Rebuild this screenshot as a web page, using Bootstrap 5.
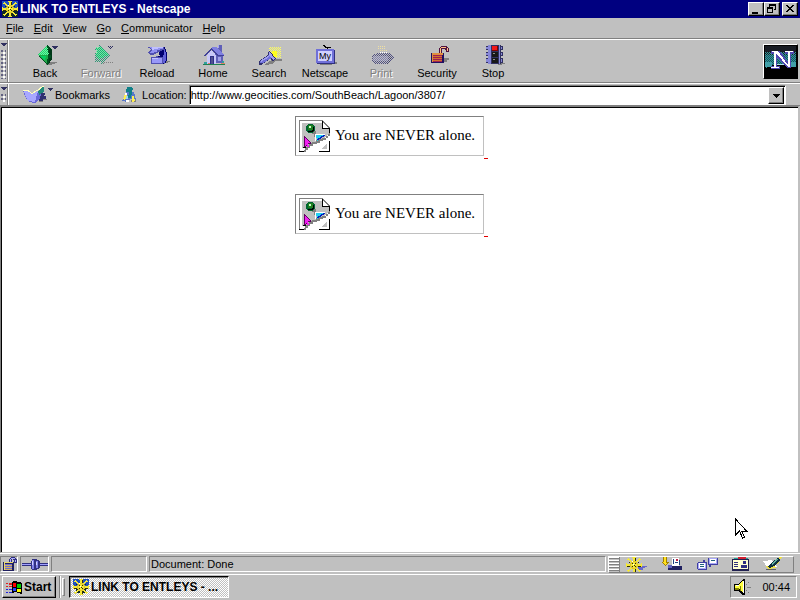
<!DOCTYPE html>
<html lang="en">
<head>
<meta charset="utf-8">
<meta name="viewport" content="width=device-width, initial-scale=1">
<title>LINK TO ENTLEYS - Netscape</title>
<link href="https://cdn.jsdelivr.net/npm/bootstrap@5.3.0/dist/css/bootstrap.min.css" rel="stylesheet">
<style>
body{font-family:"Liberation Sans",Arial,sans-serif;font-size:11px;line-height:14px;color:#000;background:#c0c0c0}
svg{shape-rendering:crispEdges;flex:none;display:block}
button{font:inherit;color:inherit;background:none;border:0;padding:0;border-radius:0}
.screen{min-height:100vh}
.titlebar{background:#000080;color:#fff;height:18px;font-size:12px;font-weight:bold;padding:0 2px;gap:2px}
.raised{background:#c0c0c0;border:1px solid;border-color:#fff #000 #000 #fff;box-shadow:inset -1px -1px #808080}
.sunken{border:1px solid;border-color:#808080 #fff #fff #808080}
.winbtn{width:16px;height:14px}
.winbtn.closer{margin-left:2px}
.menubar{height:21px;gap:10px;padding:0 6px;border-bottom:1px solid #808080}
.menubar a{color:#000;text-decoration:none}
.menubar a u{text-underline-offset:1px}
.band{border-top:1px solid #fff;border-bottom:1px solid #808080}
.toolbar{height:44px}
.locbar{height:23px;padding-right:14px}
.grip{width:8px;border-right:1px solid #808080;box-shadow:1px 0 #fff;padding:3px 1px}
.dots{width:5px;background-image:radial-gradient(circle at 1px 1px,#606080 0 1px,transparent 1px),radial-gradient(circle at 3px 3px,#fff 0 1px,transparent 1px);background-size:4px 4px}
.tool{width:56px;padding-top:4px}
.tool:disabled{color:#808080;text-shadow:1px 1px #fff}
.tools{margin-left:9px}
.nlogo{width:35px;height:35px;margin-right:2px}
.bookmarks{margin-left:15px}
.where{gap:6px;margin:0 2px 0 12px}
.field{border:1px solid #808080;border-right-color:#fff;border-bottom-color:#fff;box-shadow:inset 1px 1px #000;background:#fff;height:20px;padding:2px 1px 1px 1px}
.field input{border:0;outline:0;padding:0;background:transparent;font:inherit;color:#000;min-width:0;height:14px}
.drop{width:16px;height:17px;margin-top:-1px}
.page{background:#fff;border:1px solid #808080;border-right-color:#c0c0c0;border-bottom-color:#c0c0c0;box-shadow:inset 1px 1px #000;padding:9px 16px 8px 0;gap:35px;margin-right:1px;font-family:"Liberation Serif","Times New Roman",serif;font-size:15px;line-height:20px}
.page a{color:#000;text-decoration:none}
.broken{border:1px solid;border-color:#808080 #c0c0c0 #c0c0c0 #808080;height:40px;padding:3px 8px 3px 3px;gap:4px}
.alt{padding-top:5px}
.tail{width:4px;height:43px;border-bottom:1px solid #e00000}
.pointer{position:absolute;right:50px;bottom:12px}
.status{height:21px;padding:2px 6px 2px 0;gap:2px;border-top:1px solid #fff}
.cell{height:16px;line-height:15px;padding-left:1px}
.lock{width:18px}.plug{width:29px}.progress-cell{width:96px}
.components{width:186px;height:17px;border:1px solid;border-color:#fff #808080 #808080 #fff;padding-right:11px}
.ridges{width:11px;align-self:stretch;border-right:1px solid #808080;background:repeating-linear-gradient(#fff 0 1px,#808080 1px 2px,#c0c0c0 2px 3px)}
.launchers{padding-left:6px}
.taskbar{height:26px;border-top:1px solid #fff;padding:0 3px 1px 2px}
.start{width:54px;height:22px;font-size:12px;font-weight:bold;gap:2px;padding-left:2px}
.sep{width:2px;height:22px;border-left:1px solid #808080;border-right:1px solid #fff;margin-left:3px}
.handle{width:3px;height:18px;border:1px solid;border-color:#fff #808080 #808080 #fff;margin:0 4px 0 1px}
.task{width:160px;height:22px;border:1px solid;border-color:#000 #fff #fff #000;box-shadow:inset 1px 1px #808080;background:repeating-conic-gradient(#fff 0 25%,#c0c0c0 0 50%) 0 0/2px 2px;font-size:12px;font-weight:bold;padding-left:3px;gap:2px}
.tray{width:67px;height:22px;padding:0 6px 0 3px}
</style>
<script src="https://cdn.jsdelivr.net/npm/bootstrap@5.3.0/dist/js/bootstrap.bundle.min.js"></script>
</head>
<body>
<svg width="0" height="0" class="position-absolute" aria-hidden="true">
<defs>
<pattern id="chk" width="2" height="2" patternUnits="userSpaceOnUse"><path fill="#c0c0c0" d="M0 0h1v1H0zM1 1h1v1H1z"/></pattern>
<pattern id="mint" width="2" height="2" patternUnits="userSpaceOnUse"><path fill="#60ffa0" d="M0 0h1v1H0zM1 1h1v1H1z"/></pattern>
<pattern id="teal" width="2" height="2" patternUnits="userSpaceOnUse"><path fill="#309898" d="M0 0h1v1H0zM1 1h1v1H1z"/></pattern>
<pattern id="glow" width="2" height="2" patternUnits="userSpaceOnUse"><path fill="#ffff60" d="M0 0h1v1H0zM1 1h1v1H1z"/></pattern>
<symbol id="wheel" viewBox="0 0 16 16">
<path fill="#303000" d="M9 1h1v3H9zM9 12h1v3H9zM1 9h3v1H1zM12 9h3v1h-3zM3 5h1v1H3zM12 5h1v1h-1zM4 12h1v1H4zM12 12h1v1h-1z"/>
<path fill="#f4e838" d="M6 0h4v1H9v4H7V1H6zM7 11h2v4h1v1H6v-1h1zM0 6h1v1h4v2H1v1H0zM11 7h4V6h1v4h-1V9h-4zM1 2h1V1h1v1h1v1h1v1h1v1H4V4H3V3H1zM15 2h-1V1h-1v1h-1v1h-1v1h-1v1h2V4h1V3h2zM1 14h1v1h1v-1h1v-1h1v-1h1v-1H4v1H3v1H1zM15 14h-1v1h-1v-1h-1v-1h-1v-1h-1v-1h2v1h1v1h2z"/>
<path fill="#e0c828" fill-rule="evenodd" d="M6 4h4v1h1v1h1v4h-1v1h-1v1H6v-1H5v-1H4V6h1V5h1zM6 6v4h4V6z"/>
<path fill="#f4e838" d="M7 5h2v6H7zM5 7h6v2H5z"/><path fill="#303000" d="M8 8h1v1H8zM6 6h1v1H6zM9 6h1v1H9zM6 9h1v1H6zM9 9h1v1H9z"/><path fill="#fff" d="M7 7h1v1H7zM6 4h1v1H6z"/>
</symbol>
<symbol id="openlock" viewBox="0 0 20 20">
<path fill="#808080" d="M14 13h5v2h-2v2h-3z"/><path fill="#201060" d="M1 8h13v10H1z"/><path fill="#e09040" d="M2 8h11v2H2zM2 8h1v9H2z"/><path fill="#a02050" d="M3 10h9v1H3zM3 12h9v1H3zM3 14h9v1H3zM3 16h9v1H3z"/><path fill="#d07030" d="M3 11h9v1H3zM3 13h9v1H3zM3 15h9v1H3z"/>
<path fill="#501040" d="M9 3h1V2h1V1h6v1h1v1h1v4h-3V5h-1V4h-3v4H9z"/><path fill="#ffc080" d="M10 3h1V2h5v1h-5v5h-1zM17 3h1v3h-1z"/>
</symbol>
<symbol id="bluelock" viewBox="0 0 16 14">
<path fill="#202060" d="M1 5h11v9H1z"/><path fill="#e8d870" d="M2 5h9v1H2zM2 6h1v7H2z"/><path fill="#7070d0" d="M3 7h7v1H3zM3 9h7v1H3zM3 11h7v1H3z"/><path fill="#d0b060" d="M3 8h7v1H3zM3 10h7v1H3zM3 12h7v1H3z"/>
<path fill="#303080" d="M7 2h1V1h1V0h4v1h1v1h1v4h-3V3h-1V2h-1v3H7z"/><path fill="#b0b0ff" d="M8 2h1v3H8zM9 1h4v1H9zM13 3h1v2h-1z"/>
</symbol>
<symbol id="missing" viewBox="0 0 32 32">
<path fill="#fff" d="M0 0h24l7 8v23H0z"/><path fill="#c0c0c0" d="M3 3h20v6h7v5l-5 4-7 5-8 1-4 4H3z"/>
<path fill="#808080" d="M0 0h24v1H1v30H0z"/><path fill="#808080" d="M24 1h1v1h1v1h1v1h1v1h1v1h1v1h1v1h-2V7h-1V6h-1V5h-1V4h-1V3h-1z"/>
<path fill="#fff" d="M24 3l5 5h-5z"/><path d="M23 1h1v7h7v6h-1V9h-7zM30 21h1v11H20v-1h10zM0 31h5v1H0z"/>
<path fill="#808080" d="M30 13h1v3h-2v2h-2v2h-3v1h-3v2h-3v1h-4v2h-3v2h-2v2H7v2H5v-2h1v-3h2v-2h2v-2h3v-1h4v-2h3v-1h3v-1h4v-2h2v-2h1z"/>
<path fill="#808080" d="M13 11h4v3h2v3h-4v-3h-2z"/><path fill="#063" d="M9 4h5v1h1v1h1v5h-1v1h-1v1H9v-1H8v-1H7V6h1V5h1z"/><path fill="#208020" d="M9 5h5v5H9z"/><path fill="#cfc" d="M10 6h2v2h-2z"/><path d="M14 7h1v4h-1v1H9v-1h4v-1h1z"/>
<path fill="#20d0f0" d="M17 15h9l-8 6z"/><path fill="#0020c0" d="M24 15h2v1h-1v1h-2v1h-1v1h-2v1h-2v-1h1v-1h2v-1h1v-1h2z"/><path fill="#fff" d="M16 14h10v1h-9v6h-1z"/>
<path fill="#600060" d="M5 16h1v1h1v1h1v1h1v1h1v1h1v1h1v2H9v2H7v1H5z"/><path fill="#f020f0" d="M6 18l5 5H9v2H7v1H6zM8 25h2v2H8z"/><path fill="#000" d="M4 27h3v1H4z"/><path fill="#c0c0c0" d="M28 23v6h-6z"/>
</symbol>
</defs>
</svg>

<div class="screen d-flex flex-column">
<header class="titlebar d-flex align-items-center">
<svg width="16" height="16"><path fill="#2050c0" d="M0 0h16v9H0z"/><path fill="#102828" d="M0 8h16v8H0z"/><use href="#wheel" width="16" height="16"/></svg>
<span class="flex-grow-1">LINK TO ENTLEYS - Netscape</span>
<div class="d-flex">
<button class="raised winbtn" aria-label="Minimize"><svg width="14" height="12"><path d="M3 9h6v2H3z"/></svg></button>
<button class="raised winbtn" aria-label="Restore"><svg width="14" height="12"><path fill-rule="evenodd" d="M4 1h7v6H9V6h1V3H5v1H4zM2 4h6v6H2zM3 6h4v3H3z"/></svg></button>
<button class="raised winbtn closer" aria-label="Close"><svg width="14" height="12"><path d="M3 2h2v1h1v1h2V3h1V2h2v1h-1v1H9v1H8v1h1v1h1v1h1v1H9V8H8V7H6v1H5v1H3V8h1V7h1V6h1V5H5V4H4V3H3z"/></svg></button>
</div>
</header>
<nav class="menubar d-flex align-items-center" aria-label="Menu">
<a href="#"><u>F</u>ile</a><a href="#"><u>E</u>dit</a><a href="#"><u>V</u>iew</a><a href="#"><u>G</u>o</a><a href="#"><u>C</u>ommunicator</a><a href="#"><u>H</u>elp</a>
</nav>
<div class="band toolbar d-flex" role="toolbar" aria-label="Navigation">
<div class="grip d-flex flex-column gap-1"><svg width="6" height="3"><path fill="#303060" d="M0 0h6v1H5v1H4v1H2V2H1V1H0z"/></svg><div class="dots flex-grow-1"></div></div>
<div class="tools d-flex flex-grow-1">
<button class="tool d-flex flex-column align-items-center"><svg width="28" height="22">
<path fill="#808080" d="M17 18h9v1h-2v1h-3v1h-6v-1h2z"/><path fill="#005020" d="M16 1l5 5v8l-4 7-9-8z"/><path fill="#30c870" d="M7 11l9-10 1 10z"/><path fill="url(#mint)" d="M7 11l9-10 2 10z"/><path fill="#20a848" d="M7 11h10l-1 9z"/><path fill="#003818" d="M18 4l3 2v9l-3 5V14h2v-3h-2z"/><path fill="#00d060" d="M9 12h6l-1 5z"/><path fill="#303060" d="M21 2h6v1h-1v1h-1v1h-2V4h-1V3h-1z"/></svg>Back</button>
<button class="tool d-flex flex-column align-items-center" disabled><svg width="28" height="22">
<path fill="#808080" d="M14 19h12v-1h-9v2h-3z"/><path fill="#309878" d="M12 1l12 11-10 9v-3H8V9h2V6H8V4h4z"/><path fill="url(#chk)" d="M7 1h18v20H7z"/><path fill="url(#mint)" d="M9 3h5l7 8-8 4-4-3z"/><path fill="#303060" d="M21 2h1v1h-1zM23 2h1v1h-1zM25 2h1v1h-1zM22 3h1v1h-1zM24 3h1v1h-1zM23 4h1v1h-1z"/></svg>Forward</button>
<button class="tool d-flex flex-column align-items-center"><svg width="28" height="22">
<path fill="#808080" d="M20 17h7v1h-2v1h-3v1h-5v-1h3z"/><path fill="#000070" d="M14 3h8v2h1v3h1v9h-1v2h-2v1h-6v-8h2z"/><path fill="#5050b0" d="M5 3h16v2h1v1h-3v1h-2v1h-2v1h-2v1h-2v1H7v-1H6V9H5V8h1V7h1V6h1V5H7V4H5z"/><path fill="#9090f0" d="M7 3h13v2h-3v1h-3v2h-3v1H7V8h1V7h1V5H8V4H7z"/><path fill="#c0c0ff" d="M9 3h11v1h-5v1h-4v1H9z"/><path fill="#6060d8" d="M21 6h1v2h1v9h-1v2h-2v-8h1z"/><path fill="#5050b0" d="M8 13h5v-1h2v1h5v7H8z"/><path fill="#9898f8" d="M9 14h10v5H9z"/><path fill="#c0c0ff" d="M9 14h6v1H9z"/></svg>Reload</button>
<button class="tool d-flex flex-column align-items-center"><svg width="28" height="22">
<path fill="#208050" d="M4 20h22v1H4z"/><path fill="#6060b8" d="M19 1h4v9h-4zM16 10h8v9h-8z"/><path fill="#a8a8f0" d="M19 1h1v3h-1z"/><path fill="#c8c8f8" d="M8 11h9v9H8zM9 9h7v2H9zM11 7h3v2h-3z"/><path fill="#8080e0" d="M13 3h4l8 8h-7l-4-5z"/><path fill="#404098" d="M12 4h1v1h1v1h1v1h1v1h1v1h1v1h1v1h6v1h-7v-1h-1v-1h-1V9h-1V8h-1V7h-1V6h-1v1h-1v1h-1v1H9v1H8v1H7v1H5v-1h1v-1h1V9h1V8h1V7h1V6h1V5h1z"/><path fill="#303088" d="M11 12h4v8h-4z"/><path fill="#505090" d="M12 13h2v7h-2z"/><path fill="#a0a0e8" d="M19 13h3v4h-3z"/><path fill="#e08060" d="M9 19h2v1H9zM22 19h4v1h-4z"/><path fill="#30a0a0" d="M5 18h3v2H5zM23 17h2v2h-2z"/></svg>Home</button>
<button class="tool d-flex flex-column align-items-center"><svg width="28" height="22">
<path fill="#808080" d="M10 20l9-5h8v2h-6l-4 3-7 1z"/><path fill="url(#glow)" d="M14 3h12v11h-4l-8-6z"/><path fill="#ffff20" d="M17 7h5v6h-4z"/><path fill="#303070" d="M15 7l6 8-3 2-3-2-9 6H4v-4l9-6V8z"/><path fill="#7070d8" d="M5 17l9-6 3 3-9 5H5z"/><path fill="#a0a0f0" d="M14 8l3 3 3 4-2 1-4-4zM5 17l8-5 1 1-8 5z"/></svg>Search</button>
<button class="tool d-flex flex-column align-items-center"><svg width="28" height="22">
<path fill="#808080" d="M9 18h17v2h-5v1H9z"/><path fill="none" stroke="#000" d="M12 1l4 3 4-1M16 4v2"/><path fill="#303080" d="M6 6h18v14H6z"/><path fill="#7070d8" d="M5 5h18v14H5z"/><path fill="#d0d0ff" d="M7 7h14v10H7z"/><text x="8" y="15" font-size="9" fill="#000">My</text></svg>Netscape</button>
<button class="tool d-flex flex-column align-items-center" disabled><svg width="28" height="22">
<path fill="#f0e0a0" d="M10 2h8v1h-8zM11 4h8v1h-8zM12 6h8v1h-8z"/><path fill="#fff" d="M12 8h8v3h-8z"/><path fill="#505080" d="M5 12l5-3h12l5 5-5 6H8l-3-3z"/><path fill="#8080b0" d="M6 12h15v5H6z"/><path fill="url(#chk)" d="M4 1h23v20H4z"/><path fill="#404060" d="M22 11h1v1h-1zM23 14h1v1h-1zM22 17h1v1h-1zM20 19h1v1h-1z"/></svg>Print</button>
<button class="tool d-flex flex-column align-items-center"><svg width="28" height="22"><use href="#openlock" x="7" y="1" width="20" height="20"/></svg>Security</button>
<button class="tool d-flex flex-column align-items-center"><svg width="28" height="22">
<path fill="#808080" d="M19 19h7v1h-3v1h-4z"/><path fill="#303060" d="M9 1h13v19H9zM7 2h17v4h-3v2h3v4h-3v2h3v5h-3H7v-5h3v-2H7V8h3V6H7z"/><path fill="#8888d8" d="M9 1h3v19H9zM20 1h1v19h-1zM7 3h2v2H7zM7 9h2v2H7zM7 15h2v3H7zM22 3h1v2h-1zM22 9h1v2h-1zM22 15h1v3h-1z"/><path fill="#f01818" d="M13 2h5v5h-5z"/><path fill="#800000" d="M13 6h5v1h-5zM18 2h1v5h-1z"/><path fill="#181818" d="M13 8h6v5h-6zM13 14h6v5h-6z"/><path fill="#909090" d="M14 9h2v1h-2zM14 15h2v1h-2z"/></svg>Stop</button>
</div>
<a href="#" class="nlogo raised align-self-center" aria-label="Netscape"><svg width="33" height="33">
<path d="M0 0h33v33H0z"/><path fill="#181c24" d="M1 1h31v10H1z"/><path fill="#185060" d="M1 10h31v12H1z"/><path fill="url(#teal)" d="M1 7h31v16H1z"/><path fill="#40a0a8" d="M1 17h7v5H1zM26 17h6v5h-6z"/><path d="M1 24h3v-2h4v-2h5v-1h9v1h5v2h4v2h2v8H1z"/><path fill="#b0e0f0" d="M12 19h9v1h-9z"/>
<path fill="#5048b0" d="M7 6h9l8 11V9h-3V6h9v3h-3v14h-4L13 12v9h3v3H7v-3h3V9H7z"/><path fill="#fff" d="M8 6h6l10 14V7h-3V6h8v1h-3v15h-2L12 8v14h3v1H7v-1h3V7H8z"/></svg></a>
</div>
<div class="band locbar d-flex align-items-center">
<div class="grip d-flex flex-column gap-1 align-self-stretch"><svg width="6" height="3"><path fill="#303060" d="M0 0h6v1H5v1H4v1H2V2H1V1H0z"/></svg><div class="dots flex-grow-1"></div></div>
<button class="bookmarks d-flex align-items-center"><svg width="32" height="18">
<path fill="#808080" d="M16 13h8v1h-4v2h-4z"/><path fill="#303070" d="M16 7h6v2h-1v1h2v3h-3v2h-4z"/><path fill="#6868d8" d="M0 5l6 1 3 3 4-2 6-2-2 7-5 5-6-1-3-4z"/><path fill="#a8a8ff" d="M0 4h5l4 3 6-2-3 11-7-1z"/><path fill="none" stroke="#ffffc0" d="M0 4.500h5l4 3 7-4 2-2 3-1"/><path fill="#208878" d="M15 5l5-5 1 2v4l-5 3z"/><path fill="#303060" d="M25 2h5v1h-1v1h-1v1h-1V4h-1V3h-1z"/></svg>Bookmarks</button>
<div class="where d-flex align-items-center"><svg width="14" height="16"><path fill="#808080" d="M9 13h5v2H9z"/><path fill="#5878c8" d="M0 14l5-10 7 1 2 8-3 2-2-4-4 4z"/><path fill="#ffee50" d="M1 12l2-5 2 1-2 5zM10 9h2l1 5-3 1z"/><path fill="#108088" d="M5 0h5v1h1l-2 10H6l1-6H4z"/><path fill="#fff" d="M3 6h2v2H3zM4 13h3v2H4z"/><path fill="#a0d8f0" d="M4 9h2v3H4z"/></svg>
<label for="url">Location:</label></div>
<div class="field d-flex flex-grow-1"><input id="url" class="flex-grow-1" type="text" value="http://www.geocities.com/SouthBeach/Lagoon/3807/"><button class="raised drop" aria-label="Recent locations"><svg width="14" height="14"><path d="M4 6h7v1h-1v1H9v1H8v1H7V9H6V8H5V7H4z"/></svg></button></div>
</div>
<main class="page d-flex flex-column align-items-center flex-grow-1 position-relative">
<a href="#" class="d-flex align-items-start"><span class="broken d-flex"><svg width="32" height="32"><use href="#missing" width="32" height="32"/></svg><span class="alt">You are NEVER alone.</span></span><span class="tail"></span></a>
<a href="#" class="d-flex align-items-start"><span class="broken d-flex"><svg width="32" height="32"><use href="#missing" width="32" height="32"/></svg><span class="alt">You are NEVER alone.</span></span><span class="tail"></span></a>
<svg class="pointer" width="14" height="22"><path fill="#fff" stroke="#000" d="M1.500 1v16l4-4 3 7 2-1-3-6h5z"/></svg>
</main>
<footer class="status d-flex align-items-center">
<div class="cell lock sunken"><svg width="16" height="14"><use href="#bluelock" width="16" height="14"/></svg></div>
<div class="cell plug sunken"><svg width="26" height="14"><path fill="#303080" d="M0 6h26v3H0z"/><path fill="#a0a0ff" d="M0 7h26v1H0z"/><path fill="#303080" d="M10 2h5v1h2v1h1v7h-1v1h-2v1h-5v-1H9V4h1z"/><path fill="#8080e8" d="M10 3h2v9h-2zM14 4h2v7h-2z"/><path fill="#d0d0ff" d="M10 4h1v4h-1zM14 5h1v3h-1z"/></svg></div>
<div class="cell progress-cell sunken"></div>
<div class="cell sunken flex-grow-1" role="status">Document: Done</div>
<div class="components d-flex align-items-center">
<div class="ridges"></div>
<div class="launchers d-flex align-items-center justify-content-between flex-grow-1">
<button aria-label="Navigator"><svg width="22" height="15"><path fill="#6868c8" d="M12 9h9v1h-2v1h-2v2h-6z"/><use href="#wheel" width="16" height="16"/></svg></button>
<button aria-label="Mailbox"><svg width="22" height="14"><path fill="#202060" d="M7 9h14v4H7z"/><path fill="#6060c0" d="M7 8h4v3H7z"/><path fill="#fff" d="M11 1h7v8h-7z"/><path fill="#c02040" d="M15 2h2v2h-2z"/><path fill="#204080" d="M12 2h1v5h-1zM14 5h3v1h-3zM18 3h1v5h-1z"/><path fill="#a08000" d="M2 0h4v5h2L4 9 0 5h2z"/><path fill="#ffe020" d="M3 0h2v6h1L4 8 2 5h1z"/></svg></button>
<button aria-label="Discussions"><svg width="24" height="14"><path fill="#4040a0" d="M2 5h5V3h2v2h2v8H2v-1H1V6h1zM12 1h10v7h-7v2h-2V8h-1z"/><path fill="#a8a8f8" d="M2 6h8v6H2zM13 1h8v6h-8z"/><path fill="#fff" d="M3 6h6v5H3zM14 2h6v4h-6z"/><path fill="#206080" d="M4 7h4v1H4zM15 3h4v1h-4zM4 9h4v1H4z"/></svg></button>
<button aria-label="Address book"><svg width="17" height="14"><path fill="#202050" d="M0 2h17v12H0z"/><path fill="#d02030" d="M6 0h8v2H6z"/><path fill="#20a090" d="M2 1h4v1H2zM14 1h2v1h-2z"/><path fill="#ffffd0" d="M1 3h15v9H1z"/><path fill="#303080" d="M2 5h4v1H2zM2 7h4v1H2zM2 9h4v1H2zM11 4h3v3h-3zM9 8h6v3H9z"/></svg></button>
<button aria-label="Composer"><svg width="20" height="14"><path fill="#606060" d="M4 12h10v1H4z"/><path fill="#fff" d="M1 4l9-1 5 7-9 2z"/><path fill="#f0e040" d="M4 9h8l2 2-8 1zM14 4l3-4h3l-5 8z"/><path fill="#103040" d="M6 10l3-4 7-5 2 2-6 6-4 2z"/><path fill="#60b0a0" d="M9 7l6-5 1 1-6 5z"/></svg></button>
</div>
</div>
</footer>
<div class="taskbar d-flex align-items-center">
<button class="start raised d-flex align-items-center"><svg width="17" height="15"><path d="M7 2h1V1h4v1h4v1h1v11h-2v-1h-3v-1H9v1H7z"/><path fill="#f00" d="M8 3h3v4H8z"/><path fill="#0c0" d="M12 4h4v4h-4z"/><path fill="#2040ff" d="M8 8h3v3H8z"/><path fill="#ff0" d="M12 9h4v3h-4z"/><path fill="#e02020" d="M1 3h2v1H1zM4 3h3v2H4zM1 6h2v1H1zM4 6h3v1H4z"/><path fill="#2020e0" d="M1 9h2v1H1zM4 9h3v1H4zM1 12h2v1H1zM4 12h3v1H4z"/></svg>Start</button>
<div class="sep"></div><div class="handle"></div>
<button class="task d-flex align-items-center"><svg width="16" height="16"><path fill="#2050c0" d="M0 0h16v9H0z"/><path fill="#102828" d="M3 8h10v6H3z"/><use href="#wheel" width="16" height="16"/></svg><span>LINK TO ENTLEYS - ...</span></button>
<div class="tray sunken d-flex align-items-center justify-content-between ms-auto"><svg width="17" height="16"><path d="M0 5h4l5-5h2v16H9l-5-4H0z"/><path fill="#ffff40" d="M1 6h4l4-5v13l-4-4H1z"/><path fill="#808000" d="M1 9h4v2H1zM6 7h1v5H6z"/><path fill="#fff" d="M9 2h1v12H9zM2 6h3v1H2z"/><path fill="#808080" d="M12 5h1v1h-1zM14 3h1v1h-1zM13 8h4v1h-4zM12 11h1v1h-1zM14 13h1v1h-1z"/></svg><time>00:44</time></div>
</div>
</div>
</body>
</html>
